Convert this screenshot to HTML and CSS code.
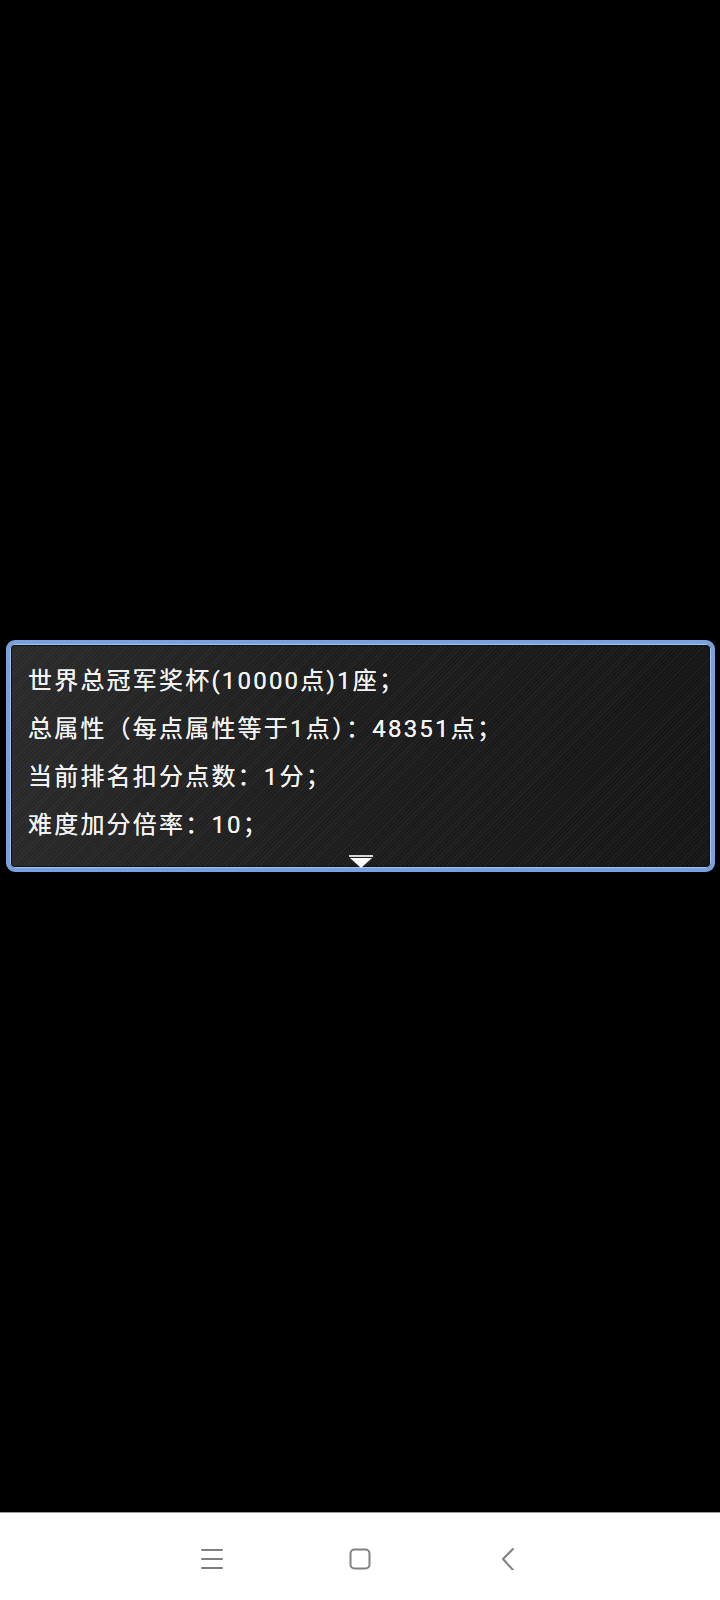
FILE: index.html
```html
<!doctype html>
<html lang="zh-CN">
  <head>
    <meta charset="utf-8" />
    <title>世界总冠军</title>
    <meta name="viewport" content="width=device-width, initial-scale=1" />
    <link rel="stylesheet" href="styles.css">
  </head>
  <body>
    <div id="screen">
      <main class="stage">
        <div class="message">
          <p>世界总冠军奖杯(10000点)1座；</p>
          <p>总属性（每点属性等于1点）：48351点；</p>
          <p>当前排名扣分点数：1分；</p>
          <p>难度加分倍率：10；</p>
          <svg class="more" width="24" height="14" viewBox="0 0 24 14">
            <rect x="0" y="0" width="24" height="2" fill="#d8d8d8" />
            <polygon points="1,3 23,3 12,13" fill="#fff" />
          </svg>
        </div>
      </main>
      <nav class="navbar">
        <button class="nav-btn" aria-label="menu">
          <svg width="22" height="22" viewBox="0 0 22 22">
            <path d="M1 2h20M1 11h20M1 20h20" stroke="#808080" stroke-width="2" stroke-linecap="round" fill="none" />
          </svg>
        </button>
        <button class="nav-btn" aria-label="home">
          <svg width="22" height="22" viewBox="0 0 22 22">
            <rect x="1.5" y="1.5" width="19" height="19" rx="4" stroke="#808080" stroke-width="2" fill="none" />
          </svg>
        </button>
        <button class="nav-btn" aria-label="back">
          <svg width="22" height="22" viewBox="0 0 22 22">
            <path d="M16 1 L6 11 L16 22" stroke="#808080" stroke-width="2" stroke-linecap="round" stroke-linejoin="round" fill="none" />
          </svg>
        </button>
      </nav>
    </div>
  </body>
</html>
```

FILE: styles.css
```css
* {
  box-sizing: border-box;
  margin: 0;
  padding: 0;
}

body {
  width: 720px;
  height: 1600px;
  background: #000;
  font-family: Roboto, "Noto Sans CJK SC", sans-serif;
}

#screen {
  display: flex;
  flex-direction: column;
  height: 1600px;
}

.stage {
  flex: 1;
  display: flex;
  flex-direction: column;
  justify-content: center;
  padding: 0 5px 0 6px;
}

.message {
  position: relative;
  height: 232px;
  border: 4px solid #78a1de;
  border-radius: 9px;
  padding: 13px 0 0 18px;
  box-shadow: inset 0 0 0 1px #a6c3ee, inset 0 0 0 2px #111;
  background:
    repeating-linear-gradient(135deg, rgba(255, 255, 255, 0.045) 0 1px, transparent 1px 3px),
    linear-gradient(100deg, #2a2a2a 0%, #1d1d1d 45%, #151515 100%);
}

.message p {
  color: #f2f2f2;
  font-size: 24px;
  line-height: 48px;
  letter-spacing: 2.2px;
  white-space: nowrap;
  text-shadow: 0 0 0.6px #fff;
}

.more {
  position: absolute;
  left: 50%;
  bottom: -1px;
  margin-left: -12px;
}

.navbar {
  height: 88px;
  background: #fff;
  border-top: 1px solid #9a9a9a;
  display: flex;
  justify-content: center;
  align-items: center;
  gap: 108px;
  padding-top: 4px;
}

.nav-btn {
  width: 40px;
  height: 40px;
  display: flex;
  align-items: center;
  justify-content: center;
  background: none;
  border: 0;
}
```
